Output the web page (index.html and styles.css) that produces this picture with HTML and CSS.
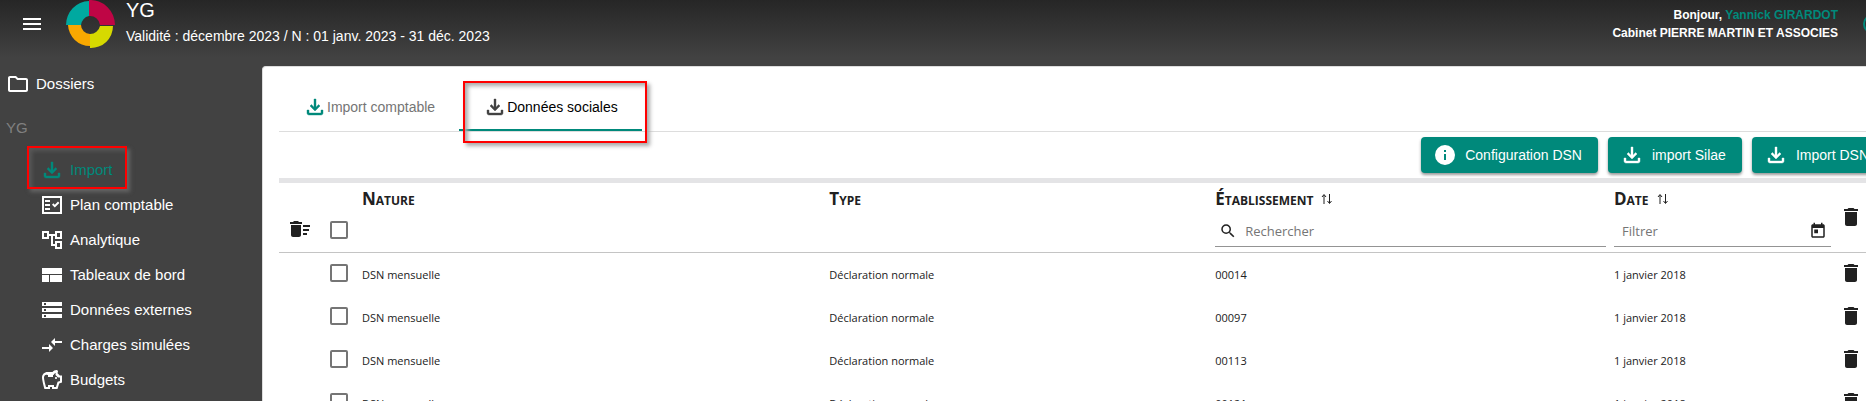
FILE: index.html
```html
<!DOCTYPE html>
<html lang="fr">
<head>
	<meta charset="UTF-8">
	<title>YG - Import</title>
	<link rel="stylesheet" href="styles.css">
</head>
<body>
	<svg class="sprite">
		<symbol id="download" viewBox="0 0 24 24"><path stroke="currentColor" stroke-width=".4" d="M18 15v3H6v-3H4v3c0 1.1.9 2 2 2h12c1.1 0 2-.9 2-2v-3h-2zm-1-4l-1.41-1.41L13 12.17V4h-2v8.17L8.41 9.59 7 11l5 5 5-5z"/></symbol>
		<symbol id="trash" viewBox="0 0 24 24"><path d="M6 19c0 1.1.9 2 2 2h8c1.1 0 2-.9 2-2V7H6v12zM19 4h-3.500l-1-1h-5l-1 1H5v2h14V4z"/></symbol>
		<symbol id="sort" viewBox="0 0 12 12"><path d="M3 11V2M1 4l2-2.500L5 4M8.500 1v9M6.500 8l2 2.500 2-2.500" fill="none" stroke="currentColor"/></symbol>
	</svg>
	<header class="topbar">
		<button class="menu" aria-label="Menu">
			<svg class="icon" viewBox="0 0 24 24"><path d="M3 18h18v-2H3v2zm0-5h18v-2H3v2zm0-7v2h18V6H3z"/></svg>
		</button>
		<svg class="logo" viewBox="0 0 50 50">
			<path fill="#00a9a0" d="M23 1A24 24 0 0 0 0 25H15A10 10 0 0 1 23 16z"/>
			<path fill="#bf0545" d="M23 0A25 25 0 0 1 49 25H34A10 10 0 0 0 23 16z"/>
			<path fill="#f9a800" d="M2 25A22 22 0 0 0 24 46V34A9 9 0 0 1 15 25z"/>
			<path fill="#d6d900" d="M47 26A22 22 0 0 1 24 48V34A10 10 0 0 0 34 26z"/>
		</svg>
		<div class="dossier">
			<h1>YG</h1>
			<p>Validité : décembre 2023 / N : 01 janv. 2023 - 31 déc. 2023</p>
		</div>
		<div class="user">
			<p>Bonjour, <a href="#">Yannick GIRARDOT</a></p>
			<p>Cabinet PIERRE MARTIN ET ASSOCIES</p>
		</div>
		<a class="help" href="#" aria-label="Aide">
			<svg class="icon" viewBox="0 0 24 24"><circle cx="12" cy="12" r="9" fill="none" stroke="currentColor" stroke-width="2"/></svg>
		</a>
	</header>
	<div class="layout">
		<nav class="sidebar">
			<a class="root" href="#"><svg class="icon" viewBox="0 0 24 24"><path d="M9.170 6l2 2H20v10H4V6h5.170M10 4H4c-1.100 0-1.990.9-1.990 2L2 18c0 1.100.9 2 2 2h16c1.100 0 2-.9 2-2V8c0-1.100-.9-2-2-2h-8l-2-2z"/></svg>Dossiers</a>
			<h2>YG</h2>
			<ul>
				<li><a class="active" href="#"><svg class="icon"><use href="#download"/></svg>Import</a></li>
				<li><a href="#"><svg class="icon" viewBox="0 0 24 24"><path fill-rule="evenodd" d="M2 3h20v18H2zM4 5v14h16V5zM5 7h5v2H5zM5 11h5v2H5zM5 15h5v2H5zM19.400 9.900L18 8.500l-3.200 3.200-1.400-1.400L12 11.700l2.800 2.800z"/></svg>Plan comptable</a></li>
				<li><a href="#"><svg class="icon" viewBox="0 0 24 24"><path d="M22 11V3h-7v3H9V3H2v8h7V8h2v10h4v3h7v-8h-7v3h-2V8h2v3h7zM7 9H4V5h3v4zm10 6h3v4h-3v-4zm0-10h3v4h-3V5z"/></svg>Analytique</a></li>
				<li><a href="#"><svg class="icon" viewBox="0 0 24 24"><path d="M2 5h20v6H2zM2 12h7v7H2zM10 12h12v7H10z"/></svg>Tableaux de bord</a></li>
				<li><a href="#"><svg class="icon" viewBox="0 0 24 24"><path d="M2 20h20v-4H2v4zm2-3h2v2H4v-2zM2 4v4h20V4H2zm4 3H4V5h2v2zm-4 7h20v-4H2v4zm2-3h2v2H4v-2z"/></svg>Données externes</a></li>
				<li><a href="#"><svg class="icon" viewBox="0 0 24 24"><path d="M9.010 14H2v2h7.010v3L13 15l-3.990-4v3zm5.980-1v-3H22V8h-7.010V5L11 9l3.990 4z"/></svg>Charges simulées</a></li>
				<li><a href="#"><svg class="icon" viewBox="0 0 24 24"><path d="M15 10c0-.55.45-1 1-1s1 .45 1 1-.45 1-1 1-1-.45-1-1zM8 9h5V7H8v2zm14-1.500v6.970l-2.820.94L17.500 21H12v-2h-2v2H4.500S2 12.540 2 9.500C2 6.460 4.460 4 7.500 4h5c.91-1.210 2.360-2 4-2 .83 0 1.500.67 1.500 1.500 0 .21-.04.41-.12.590-.14.340-.26.730-.32 1.150l2.270 2.270H22zm-2 2h-2L15.500 7c0-.65.09-1.290.26-1.910-.97.250-1.760.970-2.090 1.910H7.500C5.570 6 4 7.570 4 9.500c0 1.880 1.220 6.650 2.010 9.500H8v-2h6v2h2.010l1.550-5.150 2.440-.82V9.500z"/></svg>Budgets</a></li>
			</ul>
		</nav>
		<main class="card">
			<div class="tabs" role="tablist">
				<button class="tab" role="tab"><svg class="icon"><use href="#download"/></svg>Import comptable</button>
				<button class="tab selected" role="tab" aria-selected="true"><svg class="icon"><use href="#download"/></svg>Données sociales</button>
			</div>
			<div class="actions">
				<button><svg class="icon" viewBox="0 0 24 24"><path d="M12 2a10 10 0 1 0 0 20 10 10 0 0 0 0-20zm1 15h-2v-6h2v6zm0-8h-2V7h2v2z"/></svg>Configuration DSN</button>
				<button><svg class="icon"><use href="#download"/></svg>import Silae</button>
				<button><svg class="icon"><use href="#download"/></svg>Import DSN</button>
			</div>
			<table>
				<colgroup>
					<col class="col-sweep">
					<col class="col-check">
					<col>
					<col class="col-type">
					<col class="col-etab">
					<col class="col-date">
					<col class="col-delete">
				</colgroup>
				<thead>
					<tr>
						<th><button class="sweep" aria-label="Supprimer la sélection"><svg class="icon" viewBox="0 0 24 24"><path d="M15 16h4v2h-4zm0-8h7v2h-7zm0 4h6v2h-6zM3 18c0 1.100.9 2 2 2h6c1.100 0 2-.9 2-2V8H3v10zM14 5h-3l-1-1H6L5 5H2v2h12z"/></svg></button></th>
						<th><div class="filter"><input type="checkbox" aria-label="Tout sélectionner"></div></th>
						<th><span class="title">Nature</span></th>
						<th><span class="title">Type</span></th>
						<th>
							<span class="title">Établissement <svg class="sort"><use href="#sort"/></svg></span>
							<label class="field">
								<svg class="small" viewBox="0 0 24 24"><path d="M15.500 14h-.79l-.28-.27A6.470 6.470 0 0 0 16 9.500 6.500 6.500 0 1 0 9.500 16c1.610 0 3.090-.59 4.230-1.570l.27.28v.79l5 4.990L20.490 19l-4.990-5zm-6 0C7.010 14 5 11.990 5 9.500S7.010 5 9.500 5 14 7.010 14 9.500 11.990 14 9.500 14z"/></svg>
								<input type="text" placeholder="Rechercher" aria-label="Rechercher">
							</label>
						</th>
						<th>
							<span class="title">Date <svg class="sort"><use href="#sort"/></svg></span>
							<label class="field date">
								<input type="text" placeholder="Filtrer" aria-label="Filtrer">
								<svg class="small" viewBox="0 0 24 24"><path d="M19 3h-1V1h-2v2H8V1H6v2H5c-1.110 0-1.990.9-1.990 2L3 19c0 1.100.89 2 2 2h14c1.100 0 2-.9 2-2V5c0-1.100-.9-2-2-2zm0 16H5V8h14v11zM7 10h5v5H7z"/></svg>
							</label>
						</th>
						<th class="delete"><button aria-label="Tout supprimer"><svg class="icon"><use href="#trash"/></svg></button></th>
					</tr>
				</thead>
				<tbody>
					<tr>
						<td></td>
						<td><input type="checkbox" aria-label="Sélectionner 00014"></td>
						<td>DSN mensuelle</td>
						<td>Déclaration normale</td>
						<td>00014</td>
						<td>1 janvier 2018</td>
						<td><button aria-label="Supprimer"><svg class="icon"><use href="#trash"/></svg></button></td>
					</tr>
					<tr>
						<td></td>
						<td><input type="checkbox" aria-label="Sélectionner 00097"></td>
						<td>DSN mensuelle</td>
						<td>Déclaration normale</td>
						<td>00097</td>
						<td>1 janvier 2018</td>
						<td><button aria-label="Supprimer"><svg class="icon"><use href="#trash"/></svg></button></td>
					</tr>
					<tr>
						<td></td>
						<td><input type="checkbox" aria-label="Sélectionner 00113"></td>
						<td>DSN mensuelle</td>
						<td>Déclaration normale</td>
						<td>00113</td>
						<td>1 janvier 2018</td>
						<td><button aria-label="Supprimer"><svg class="icon"><use href="#trash"/></svg></button></td>
					</tr>
					<tr>
						<td></td>
						<td><input type="checkbox" aria-label="Sélectionner 00121"></td>
						<td>DSN mensuelle</td>
						<td>Déclaration normale</td>
						<td>00121</td>
						<td>1 janvier 2018</td>
						<td><button aria-label="Supprimer"><svg class="icon"><use href="#trash"/></svg></button></td>
					</tr>
				</tbody>
			</table>
		</main>
	</div>
</body>
</html>
```
FILE: styles.css
```css
*, *::after {
	box-sizing: border-box;
}
html, body {
	height: 100%;
}
body {
	display: flex;
	flex-direction: column;
	margin: 0;
	overflow: hidden;
	background: #424242;
	color: #fff;
	font-family: "Liberation Sans", Arial, sans-serif;
	font-size: 15px;
}
h1, h2, p, ul {
	margin: 0;
	padding: 0;
	list-style: none;
}
h1, h2 {
	font-weight: normal;
}
a {
	color: inherit;
	text-decoration: none;
}
button {
	padding: 0;
	border: 0;
	background: none;
	color: inherit;
	font: inherit;
	cursor: pointer;
}
.sprite {
	display: none;
}
.icon {
	display: block;
	flex: none;
	width: 24px;
	height: 24px;
	fill: currentColor;
}
/* header */
.topbar {
	display: flex;
	flex: none;
	height: 66px;
	padding-left: 20px;
	background: linear-gradient(#262626, #424242 58px);
}
.menu {
	height: 48px;
}
.logo {
	width: 50px;
	height: 50px;
	margin: 0 10px 0 22px;
}
.dossier h1 {
	font-size: 20px;
	line-height: 20px;
}
.dossier p {
	margin-top: 6px;
	font-size: 14px;
	line-height: 20px;
}
.user {
	margin: 6px 23px 0 auto;
	font-size: 12px;
	font-weight: bold;
	line-height: 18px;
	text-align: right;
}
.user a, .help {
	color: #00897b;
}
.help {
	margin: 12px -19px 0 0;
}
.layout {
	display: flex;
	flex: 1;
	min-height: 0;
}
/* menu */
.sidebar {
	flex: none;
	width: 262px;
}
.sidebar a {
	display: flex;
	align-items: center;
	gap: 6px;
	height: 35px;
	padding-left: 40px;
}
.sidebar .root {
	padding-left: 6px;
}
.sidebar h2 {
	padding: 3px 0 0 6px;
	color: #808080;
	font-size: 15px;
	line-height: 48px;
}
.sidebar li {
	position: relative;
}
.sidebar .active {
	color: #00897b;
}
.sidebar .active::after, .selected::after {
	content: "";
	position: absolute;
	border: 2px solid #f00;
}
.sidebar .active::after {
	top: -6px;
	left: 27px;
	width: 100px;
	height: 43px;
	box-shadow: 3px 3px 4px #666, inset 3px 3px 4px #585858;
}
/* content, wider than the window on the right */
.card {
	flex: 1;
	margin-right: -22px;
	padding: 16px 0 0 16px;
	border: 1px solid #ddd;
	border-bottom: 0;
	border-radius: 4px 0 0 0;
	background: #fff;
	color: #212121;
}
.tabs {
	display: flex;
	height: 49px;
	border-bottom: 1px solid #ddd;
}
.tab {
	position: relative;
	display: flex;
	align-items: center;
	height: 48px;
	padding: 0 24px;
	color: #757575;
	font-size: 14px;
}
.tab .icon {
	color: #00897b;
}
.selected {
	box-shadow: inset 0 -2px #00897b;
	color: #000;
}
.selected .icon {
	color: #424242;
}
.selected::after {
	top: -2px;
	left: 4px;
	width: 184px;
	height: 62px;
	box-shadow: 3px 3px 4px #aaa, inset 3px 3px 4px #aaa;
}
.actions {
	display: flex;
	justify-content: flex-end;
	gap: 10px;
	padding: 5px 2px 5px 0;
}
.actions button {
	display: flex;
	align-items: center;
	gap: 8px;
	height: 36px;
	padding: 0 16px 0 12px;
	border-radius: 4px;
	background: #00897b;
	box-shadow: 0 2px 3px #999;
	color: #fff;
	font-size: 14px;
}
/* table */
table {
	width: 100%;
	table-layout: fixed;
	border-top: 5px solid #e4e4e6;
	border-spacing: 0;
	font-family: "Open Sans", sans-serif;
	font-size: 11px;
}
.col-sweep {
	width: 51px;
}
.col-check {
	width: 32px;
}
.col-type {
	width: 24%;
}
.col-etab {
	width: 24.8%;
}
.col-date {
	width: 225px;
}
.col-delete {
	width: 48px;
}
th, td {
	padding: 0;
	text-align: left;
}
th {
	height: 70px;
	padding-top: 6px;
	border-bottom: 1px solid #c4c4c4;
	vertical-align: top;
}
th.delete {
	padding: 2px 0 0;
	vertical-align: middle;
}
td {
	height: 43px;
}
.title {
	display: flex;
	align-items: baseline;
	gap: 8px;
	font-size: 17px;
	font-variant: small-caps;
	line-height: 20px;
}
.sort {
	width: 12px;
	height: 12px;
}
.sweep {
	margin: 28px 0 0 9px;
}
.filter {
	margin-top: 32px;
}
input[type=checkbox] {
	display: block;
	width: 18px;
	height: 18px;
	margin: 0 0 3px;
	border: 2px solid #757575;
	border-radius: 2px;
	background: #fff;
	appearance: none;
}
.field {
	display: flex;
	align-items: center;
	gap: 8px;
	height: 32px;
	margin: 6px 8px 0 0;
	padding: 0 4px;
	border-bottom: 1px solid #949494;
}
.small {
	flex: none;
	width: 18px;
	height: 18px;
	fill: currentColor;
}
.field input {
	flex: 1;
	min-width: 0;
	padding: 0;
	border: 0;
	outline: 0;
	background: none;
	font: 13px "Open Sans", sans-serif;
}
.field input::placeholder {
	color: #757575;
}
.date {
	padding-left: 8px;
}
```
